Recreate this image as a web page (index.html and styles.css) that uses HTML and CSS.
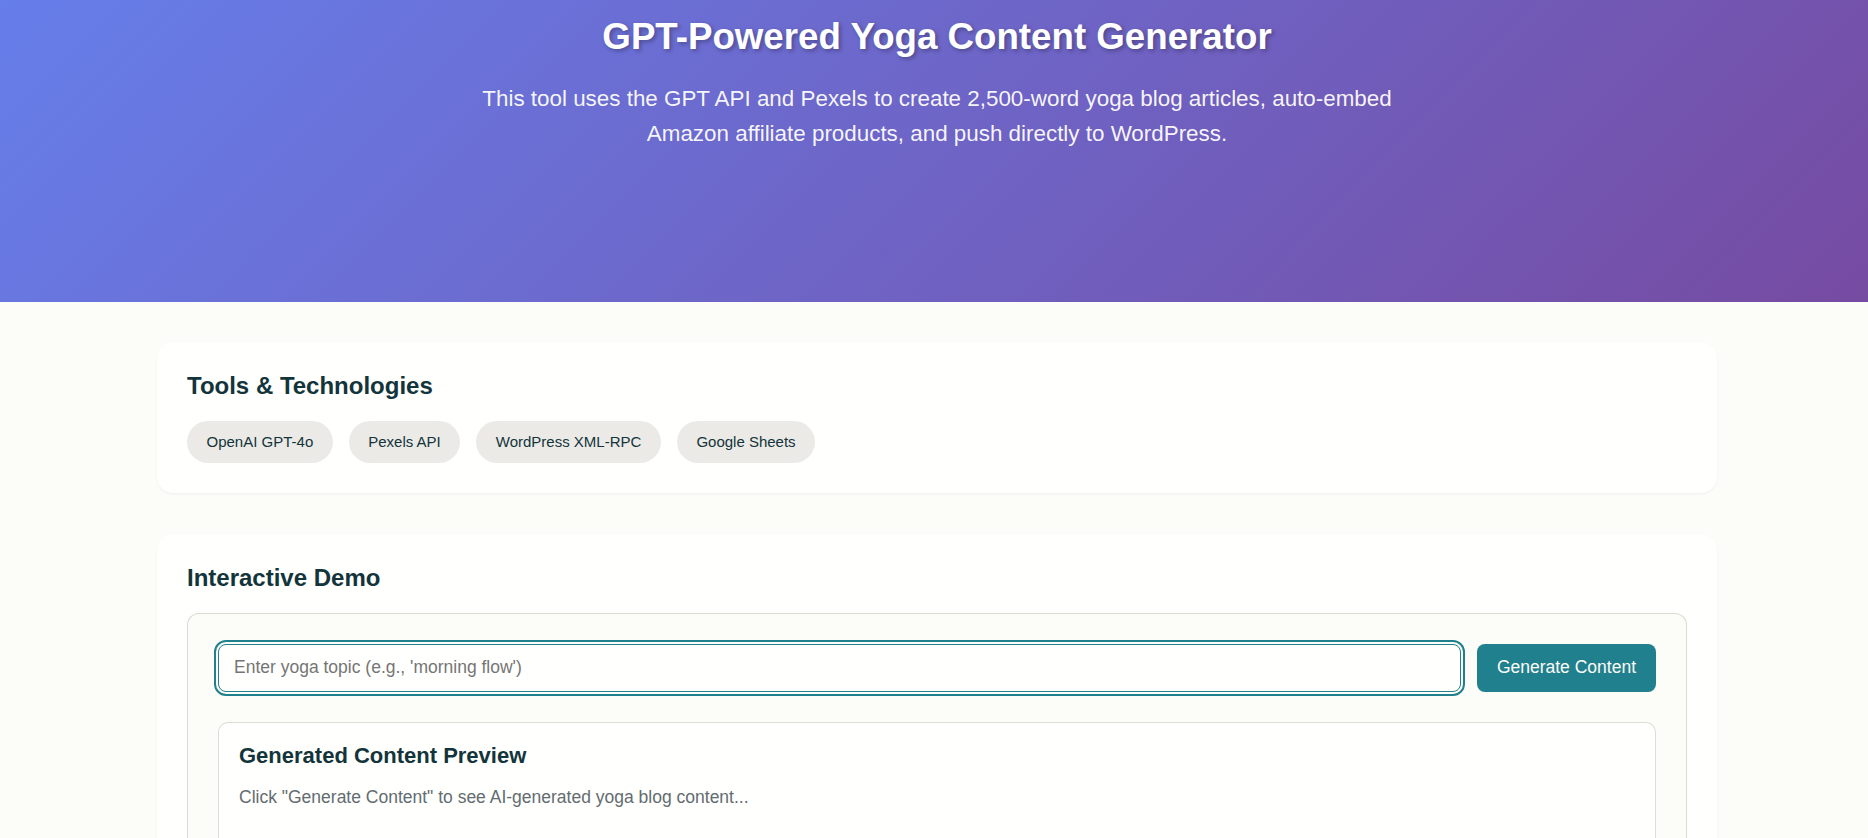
FILE: index.html
```html
<!DOCTYPE html>
<html lang="en">
<head>
<meta charset="utf-8">
<title>GPT-Powered Yoga Content Generator</title>
<link rel="stylesheet" href="styles.css">
</head>
<body>
<header class="hero">
  <div class="hero-inner">
    <h1 class="hero-title">GPT-Powered Yoga Content Generator</h1>
    <p class="hero-sub">This tool uses the GPT API and Pexels to create 2,500-word yoga blog articles, auto-embed Amazon affiliate products, and push directly to WordPress.</p>
  </div>
</header>
<main class="page">
  <section class="card">
    <h2 class="card-title">Tools &amp; Technologies</h2>
    <div class="tags">
      <span class="tag">OpenAI GPT-4o</span>
      <span class="tag">Pexels API</span>
      <span class="tag">WordPress XML-RPC</span>
      <span class="tag">Google Sheets</span>
    </div>
  </section>
  <section class="card">
    <h2 class="card-title">Interactive Demo</h2>
    <div class="demo">
      <div class="demo-form">
        <input class="demo-input" type="text" placeholder="Enter yoga topic (e.g., 'morning flow')">
        <button class="demo-btn" type="button">Generate Content</button>
      </div>
      <div class="preview">
        <h3 class="preview-title">Generated Content Preview</h3>
        <p class="preview-text">Click "Generate Content" to see AI-generated yoga blog content...</p>
      </div>
    </div>
  </section>
</main>
</body>
</html>
```

FILE: styles.css
```css
* { box-sizing: border-box; }

body {
  margin: 0;
  background: #fcfcf9;
  color: #13343b;
  font-family: "Liberation Sans", Arial, sans-serif;
}

.hero {
  background: linear-gradient(135deg, #667eea 0%, #764ba2 100%);
  color: #ffffff;
  height: 302px;
  padding: 15px 20px 0 26px;
  text-align: center;
}

.hero-title {
  margin: 0 0 22px;
  font-size: 36.7px;
  line-height: 1.2;
  font-weight: 700;
  text-shadow: 2px 2px 4px rgba(0, 0, 0, 0.3);
}

.hero-sub {
  max-width: 960px;
  margin: 0 auto;
  font-size: 22.4px;
  line-height: 35px;
  color: rgba(255, 255, 255, 0.94);
}

.page {
  max-width: 1566px;
  margin: 0 auto;
  padding: 40px 0 40px 6px;
}

.card {
  background: #fffffd;
  border-radius: 16px;
  padding: 30px;
  margin-bottom: 41px;
  box-shadow: 0 1px 3px rgba(0, 0, 0, 0.04), 0 1px 2px rgba(0, 0, 0, 0.02);
}

.card-title {
  margin: 0 0 20px;
  font-size: 24px;
  line-height: 1.2;
  font-weight: 700;
  color: #13343b;
}

.tags {
  display: flex;
  flex-wrap: wrap;
  gap: 16px;
}

.tag {
  display: inline-flex;
  align-items: center;
  height: 42px;
  padding: 0 19.5px;
  border-radius: 9999px;
  background: rgba(94, 82, 64, 0.12);
  color: #13343b;
  font-size: 15px;
}

.demo {
  background: #fcfcf9;
  border: 1px solid rgba(94, 82, 64, 0.2);
  border-radius: 12px;
  padding: 30px;
}

.demo-form {
  display: flex;
  gap: 16px;
  margin-bottom: 30px;
}

.demo-input {
  flex: 1;
  height: 48px;
  padding: 0 15px;
  border: 1px solid #21808d;
  border-radius: 8px;
  background: #fffffd;
  outline: 2px solid #21808d;
  outline-offset: 2px;
  font-family: inherit;
  font-size: 17.5px;
  color: #13343b;
}

.demo-input::placeholder { color: #757575; }

.demo-btn {
  height: 48px;
  padding: 0 20px;
  border: none;
  border-radius: 8px;
  background: #21808d;
  color: #fcfcf9;
  font-family: inherit;
  font-size: 17.5px;
  cursor: pointer;
}

.preview {
  background: #fffffd;
  border: 1px solid rgba(94, 82, 64, 0.2);
  border-radius: 10px;
  padding: 20px;
  min-height: 200px;
}

.preview-title {
  margin: 0 0 14px;
  font-size: 22px;
  line-height: 1.2;
  font-weight: 700;
  color: #13343b;
}

.preview-text {
  margin: 0;
  font-size: 17.5px;
  line-height: 1.6;
  color: #626c71;
}
```
